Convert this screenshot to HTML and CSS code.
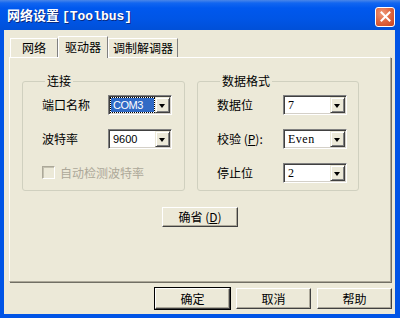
FILE: index.html
```html
<!DOCTYPE html>
<html lang="zh-CN">
<head>
    <meta charset="UTF-8">
    <title>网络设置 [Toolbus]</title>
    <link rel="stylesheet" href="styles.css">
</head>
<body>
    <div class="window">
        <div class="titlebar">
            <span class="title">网络设置 <span class="latin">[Toolbus]</span></span>
            <button class="close" title="关闭">
                <svg width="11" height="11" viewBox="0 0 11 11">
                    <path d="M1.5 1.5 L9.5 9.5 M9.5 1.5 L1.5 9.5" stroke="#ffffff" stroke-width="2" stroke-linecap="square" fill="none"/>
                </svg>
            </button>
        </div>

        <div class="client">
            <div class="tabs">
                <div class="tab tab-net">网络</div>
                <div class="tab tab-driver active">驱动器</div>
                <div class="tab tab-modem">调制解调器</div>
            </div>

            <div class="pane">
                <div class="groups">
                    <fieldset class="group group-link">
                        <legend>连接</legend>
                        <div class="row">
                            <span class="label">端口名称</span>
                            <div class="combo">
                                <span class="value sans focused">COM3</span>
                                <span class="arrow"></span>
                            </div>
                        </div>
                        <div class="row">
                            <span class="label">波特率</span>
                            <div class="combo">
                                <span class="value sans">9600</span>
                                <span class="arrow"></span>
                            </div>
                        </div>
                        <div class="row check disabled">
                            <span class="box"></span>
                            <span class="check-text">自动检测波特率</span>
                        </div>
                    </fieldset>

                    <fieldset class="group group-format">
                        <legend>数据格式</legend>
                        <div class="row">
                            <span class="label">数据位</span>
                            <div class="combo">
                                <span class="value serif">7</span>
                                <span class="arrow"></span>
                            </div>
                        </div>
                        <div class="row">
                            <span class="label">校验 (<u>P</u>):</span>
                            <div class="combo">
                                <span class="value serif">Even</span>
                                <span class="arrow"></span>
                            </div>
                        </div>
                        <div class="row">
                            <span class="label">停止位</span>
                            <div class="combo">
                                <span class="value serif">2</span>
                                <span class="arrow"></span>
                            </div>
                        </div>
                    </fieldset>
                </div>

                <div class="center">
                    <button class="btn btn-default-values">确省 (<u>D</u>)</button>
                </div>
            </div>

            <div class="footer">
                <button class="btn btn-ok">确定</button>
                <button class="btn">取消</button>
                <button class="btn">帮助</button>
            </div>
        </div>
    </div>
</body>
</html>
```

FILE: styles.css
```css
/* Window frame */
body {
    margin: 0;
    padding: 0;
    font-family: "Noto Sans CJK SC", "Liberation Sans", sans-serif;
    font-size: 12px;
    color: #000000;
    background: #ffffff;
}

.window {
    width: 400px;
    height: 318px;
    background: #0054e6;
    display: flex;
    flex-direction: column;
    overflow: hidden;
}

.titlebar {
    height: 30px;
    flex: none;
    display: flex;
    align-items: center;
    justify-content: space-between;
    padding: 0 5px 0 7px;
    background: linear-gradient(#4a86e8 0, #1266f0 3px, #0058ee 8px, #0055e5 20px, #0050d8 100%);
    box-sizing: border-box;
}

.title {
    color: #ffffff;
    font-weight: bold;
    font-size: 13px;
    line-height: 16px;
    text-shadow: 1px 1px 0 #0a2a80;
    padding-top: 2px;
}

.title .latin {
    font-family: "Liberation Mono", monospace;
    font-size: 13px;
}

.close {
    width: 20px;
    height: 20px;
    padding: 0;
    border: 1px solid #ffffff;
    border-radius: 3px;
    background: radial-gradient(circle at 35% 30%, #f09a7a 0, #e06a45 45%, #c8401d 100%);
    display: flex;
    align-items: center;
    justify-content: center;
    margin-top: 3px;
}

.client {
    flex: 1;
    margin: 0 5px 4px 4px;
    background: #ece9d8;
}

/* Tabs */
.tabs {
    height: 27px;
    display: flex;
    align-items: flex-end;
    padding-left: 6px;
}

.tab {
    height: 19px;
    box-sizing: border-box;
    border: 1px solid #ffffff;
    border-right-color: #808080;
    border-bottom: none;
    text-align: center;
    line-height: 18px;
    background: #ece9d8;
}

.tab-net {
    width: 48px;
}

.tab-driver {
    width: 50px;
}

.tab-modem {
    width: 70px;
}

.tab.active {
    height: 22px;
    margin-bottom: -1px;
    line-height: 19px;
    position: relative;
    z-index: 1;
}

.pane {
    margin-left: 5px;
    width: 382px;
    height: 225px;
    box-sizing: border-box;
    border: 1px solid #ffffff;
    border-right-color: #aca899;
    border-bottom-color: #aca899;
    box-shadow: 1px 1px 0 #716f64;
    padding: 16px 0 0 12px;
}

/* Group boxes */
.groups {
    display: flex;
    gap: 12px;
}

.group {
    margin: 0;
    padding: 7px 8px 8px 19px;
    border: 1px solid #d0d0bf;
    border-radius: 3px;
    min-width: 0;
    box-sizing: border-box;
}

.group-link {
    width: 163px;
}

.group-format {
    width: 162px;
}

.group legend {
    padding: 0 2px;
    margin-left: 3px;
    line-height: 14px;
}

.row {
    display: flex;
    align-items: center;
    height: 19px;
    margin-bottom: 15px;
}

.row:last-child {
    margin-bottom: 0;
}

.label {
    width: 66px;
    flex: none;
    white-space: nowrap;
}

/* Combo boxes */
.combo {
    width: 64px;
    height: 20px;
    box-sizing: border-box;
    border: 1px solid;
    border-color: #808080 #ffffff #ffffff #808080;
    box-shadow: inset 1px 1px 0 #404040, inset -1px -1px 0 #d4d0c8;
    background: #ffffff;
    display: flex;
    align-items: stretch;
    padding: 1px;
}

.value {
    flex: 1;
    margin: 1px;
    padding-left: 2px;
    line-height: 14px;
}

.value.sans {
    font-family: "Liberation Sans", sans-serif;
    font-size: 11px;
}

.value.serif {
    font-family: "Liberation Serif", serif;
    font-size: 12px;
    letter-spacing: 0.5px;
}

.value.focused {
    background: #316ac5;
    color: #ffffff;
    outline: 1px dotted #000000;
    letter-spacing: -0.5px;
}

.arrow {
    width: 15px;
    flex: none;
    box-sizing: border-box;
    background: #ece9d8;
    border: 1px solid;
    border-color: #ece9d8 #404040 #404040 #ece9d8;
    box-shadow: inset 1px 1px 0 #ffffff, inset -1px -1px 0 #808080;
    position: relative;
}

.arrow::after {
    content: "";
    position: absolute;
    left: 3px;
    top: 6px;
    border-left: 3.5px solid transparent;
    border-right: 3.5px solid transparent;
    border-top: 4px solid #000000;
}

/* Disabled checkbox */
.check .box {
    width: 13px;
    height: 13px;
    box-sizing: border-box;
    border: 1px solid;
    border-color: #aca899 #ffffff #ffffff #aca899;
    box-shadow: inset 1px 1px 0 #c4c1b0;
    margin-right: 5px;
    flex: none;
}

.disabled .check-text {
    color: #aca899;
}

/* Buttons */
.center {
    display: flex;
    justify-content: center;
    margin-top: 16px;
    padding-right: 12px;
}

.btn {
    font-family: "Noto Sans CJK SC", "Liberation Sans", sans-serif;
    font-size: 12px;
    color: #000000;
    background: #ece9d8;
    border: 1px solid;
    border-color: #ffffff #404040 #404040 #ffffff;
    box-shadow: inset -1px -1px 0 #aca899;
    padding: 0;
    line-height: 16px;
    width: 75px;
    height: 21px;
}

.btn-default-values {
    width: 76px;
    height: 20px;
}

.btn-ok {
    outline: 1px solid #000000;
    outline-offset: 0;
    border-color: #ffffff #404040 #404040 #ffffff;
}

.footer {
    display: flex;
    justify-content: flex-end;
    gap: 6px;
    margin-top: 6px;
    padding-right: 3px;
}
```
